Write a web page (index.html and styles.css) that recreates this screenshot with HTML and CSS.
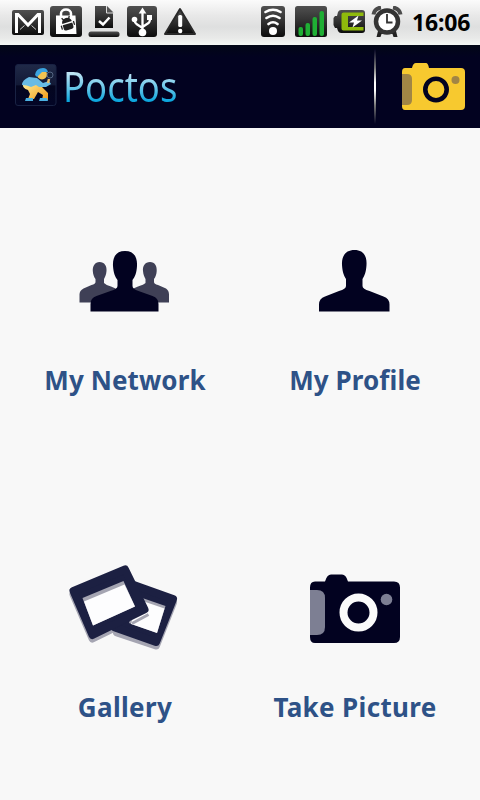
FILE: index.html
```
<!DOCTYPE html>
<html lang="en">
<head>
<meta charset="utf-8">
<title>Poctos</title>
<link rel="stylesheet" href="styles.css">
</head>
<body>
<svg class="defs" width="0" height="0" aria-hidden="true">
  <defs>
    <linearGradient id="dark" x1="0" y1="0" x2="0" y2="1"><stop offset="0" stop-color="#505050"/><stop offset=".5" stop-color="#303030"/><stop offset="1" stop-color="#0c0c0c"/></linearGradient>
    <linearGradient id="tile" x1="0" y1="0" x2="0" y2="1"><stop offset="0" stop-color="#202a48"/><stop offset=".5" stop-color="#121936"/><stop offset=".52" stop-color="#04061f"/><stop offset="1" stop-color="#030526"/></linearGradient>
    <linearGradient id="pants" x1="0" y1="0" x2="1" y2="1"><stop offset="0" stop-color="#fff3a0"/><stop offset="1" stop-color="#f29a16"/></linearGradient>
  </defs>
</svg>
<div class="status">
  <div class="icons">
    <svg viewBox="12 6 32 32"><rect x="12" y="10" width="32" height="25" rx="2" fill="url(#dark)"/><path d="M16.500 33V14.500h1.500l10 10.500 10-10.500h1.500V33" fill="none" stroke="#fff" stroke-width="3"/><path d="M20 29.500l4.500-4M36 29.500l-4.500-4" stroke="#ccc" stroke-width="1"/></svg>
    <svg viewBox="50 6 32 32"><rect x="50" y="6" width="32" height="31" rx="3" fill="url(#dark)"/><path d="M61 17v-3.500a5 4 0 0 1 10 0V17" fill="none" stroke="#fff" stroke-width="2.500"/><path d="M56 15.500h19.500L76.500 34H56z" fill="#fff"/><g transform="rotate(-17 67 24)" fill="#222"><path d="M62.500 22.500a5 4.700 0 0 1 10 0zM62.500 24h10v4a2 2 0 0 1-2 2h-6a2 2 0 0 1-2-2z"/><path d="M63.500 17l1.500 2.500M71.500 17L70 19.500M61 24v4M74 23v4" stroke="#222" stroke-width="1.300"/></g></svg>
    <svg viewBox="88 6 32 32"><path d="M95 6h11.500l6.500 7v15H95z" fill="url(#dark)"/><path d="M107 6v6.500h6.500z" fill="#555"/><path d="M106.500 6v7h7" fill="none" stroke="#ddd"/><path d="M99 21l4 3.500 6.500-7" fill="none" stroke="#fff" stroke-width="2.500"/><rect x="88.500" y="31.500" width="31" height="5.500" rx="2.500" fill="url(#dark)"/></svg>
    <svg viewBox="126 6 32 32"><rect x="127" y="6" width="30" height="31" rx="3" fill="url(#dark)"/><path d="M142.500 11v20M142.500 28l-6-4q-1.800-1-1.800-4M142.500 27l6-4q1.500-1 1.500-5" fill="none" stroke="#fff" stroke-width="2.300"/><path d="M142.500 7.500l3.800 6h-7.600z" fill="#fff"/><circle cx="134.500" cy="19.500" r="2.800" fill="#fff"/><rect x="147" y="15" width="5" height="5" fill="#fff"/><circle cx="142.500" cy="32.500" r="3.800" fill="#fff"/></svg>
    <svg viewBox="164 6 32 32"><path d="M180 9l15 25h-30z" fill="url(#dark)" stroke="#292929" stroke-width="2" stroke-linejoin="round"/><rect x="178.200" y="15" width="4" height="12" rx="1.500" fill="#fff"/><circle cx="180.200" cy="31" r="2.200" fill="#fff"/></svg>
  </div>
  <div class="icons">
    <svg viewBox="257 6 32 32"><rect x="261" y="6" width="24" height="31" rx="3" fill="url(#dark)"/><g fill="none" stroke="#fff" stroke-width="2.600" stroke-linecap="round"><path d="M265.500 12q7.500-4.500 15 0M266.500 18q6.500-4.500 13 0M268.500 24q4.500-3.500 9 0"/></g><circle cx="273" cy="31" r="4" fill="#fff"/></svg>
    <svg viewBox="295 6 32 32"><rect x="295" y="6" width="32" height="31" rx="2.500" fill="url(#dark)"/><g fill="#1fae34"><rect x="298.500" y="27" width="4.500" height="9" rx="2"/><rect x="305.500" y="23" width="4.500" height="13" rx="2"/><rect x="312.500" y="17" width="4.500" height="19" rx="2"/><rect x="319.500" y="11" width="4.500" height="25" rx="2"/></g></svg>
    <svg viewBox="333 6 32 32"><path d="M337 16h-2l-1.500 2v7l1.500 3h2l1 3q1 2 3 2h21q3 0 3-3V13q0-3-3-3h-21q-2 0-3 2z" fill="url(#dark)"/><path d="M363.500 12.500h-20q-2 0-2 2v14q0 2 2 2h20V27H348V16h15.500z" fill="#8fba0c"/><path d="M358.500 15.500l-9.500 7h5l-1.500 5 9.500-7h-5z" fill="#fff"/></svg>
    <svg viewBox="371 6 32 32"><path d="M378 31l-1.500 6h4l1-3h11l1 3h4L396 31z" fill="#222"/><path d="M373.500 14.500q1-6 7.500-7M400.500 14.500q-1-6-7.500-7" stroke="#4b4b4b" stroke-width="4" fill="none"/><circle cx="387" cy="21.500" r="11" fill="#fff" stroke="#343434" stroke-width="4.500"/><path d="M387 14v8.500h5.500" fill="none" stroke="#333" stroke-width="1.800"/></svg>
    <span class="time">16:06</span>
  </div>
</div>
<header class="header">
  <div class="brand">
    <svg class="mark" viewBox="15 64 42 42"><rect x="15.500" y="64.500" width="40.500" height="41" rx="2.500" fill="url(#tile)" stroke="#192243"/><path d="M23 84q-1 4 5 6l2 4-2 5h6l4-7 5 3-1 5h6l0-7-6-6-6-4-6-2z" fill="url(#pants)"/><path d="M22 85q0-5 7-8l8 1 6 5 6-2 2 3-5 3-7 0-3-2-5 2q-4-2-9-2z" fill="#68bbe5"/><circle cx="42" cy="74.500" r="5" fill="#f3c451"/><path d="M35 75q1-7 8-7 4 0 5 4h-6l-5 5z" fill="#3ba4df"/><circle cx="50" cy="75" r="3" fill="#17233e" stroke="#647693" stroke-width=".8"/><path d="M49 79l-1 4" stroke="#edbd69" stroke-width="2.500"/><path d="M26 98h7l0 3h-8zM40 98h7l1 3h-9z" fill="#4bb0e1"/></svg>
    <span class="name">Poctos</span>
  </div>
  <div class="divider"></div>
  <svg class="snap" viewBox="402 62 63 49"><path d="M405 68h7q1-5 4-5h10q2 0 3 5h32q4 0 4 4v34q0 4-4 4h-56q-3 0-3-4V72q0-4 3-4z" fill="#f7c92f"/><path d="M402 74h5q5 0 5 5v21q0 5-5 5h-5z" fill="#a18545"/><circle cx="436" cy="89.500" r="10.700" fill="none" stroke="#020220" stroke-width="4.600"/><circle cx="455.500" cy="80" r="4" fill="#a18545"/></svg>
</header>
<main class="menu">
  <a class="item">
    <svg viewBox="65 225 120 110"><g fill="#3f4056"><path d="M99.500 262c5 0 7.500 4 7 9-.3 4-1.500 6-2.500 8v4q2 2 7 3.500 8 2.500 8 7v9H79.500v-8q0-4 4-6l8-3.500q4-1 4-3v-3c-1.500-2-2.500-4.500-2.700-8-.3-5 2.200-9 6.700-9z"/><path d="M150 262c5 0 7 4 6.700 9-.2 3.500-1.200 6-2.700 8v3q0 2 4 3l8 3.500q3 2 3 6v8h-39v-9q0-4.500 8-7 6-2 7.500-3.500v-4c-1-2-2.200-4-2.500-8-.5-5 2-9 7-9z"/></g><path d="M125 251c9 0 12.500 6 12 15-.4 7-2 11-4.500 14v6q0 3 6 5l14 5q6 2 6 8v7.500H90.500V304q0-6 6-8l14-5q7-2 7-5v-6c-2.500-3-4-7-4.500-14-.5-9 3-15 12-15z" fill="#020220"/></svg>
    <span class="label">My Network</span>
  </a>
  <a class="item">
    <svg viewBox="295 225 120 110"><path d="M354.500 250c9 0 12.500 6 12 15-.4 7-2 11-4 14v7q0 3 7 5l14 5.500q6 2 6 8v7H319v-7q0-6 6-8l14-5.500q7-2 7-5v-7c-2-3-3.600-7-4-14-.5-9 3.500-15 12.500-15z" fill="#020220"/></svg>
    <span class="label">My Profile</span>
  </a>
  <a class="item">
    <svg viewBox="65 552 120 110"><g stroke-linejoin="round" stroke-width="8"><g transform="translate(0 3.500)" fill="#a5a5b2" stroke="#a5a5b2"><path d="M131 584L173 599 156 642 117 629z"/><path d="M73.500 591L125 569.500 144.500 609.500 92.500 635z"/></g><path d="M131 584L173 599 156 642 115 627.500z" fill="#1c2042" stroke="#1c2042"/><path d="M138 596.500L165.500 606 157 633 129 623z" fill="#a5a5b2"/><path d="M138 599.500L164.500 608.500 157 633 131 624z" fill="#fdfdfe"/><path d="M132 623.500L148.500 614.500" stroke="#a5a5b2" stroke-width="3"/><path d="M73.500 591L125 569.500 144.500 609.500 92.500 635z" fill="#1c2042" stroke="#1c2042"/></g><path d="M82.500 598L123.500 581 135 606.500 93 625.500z" fill="#a5a5b2"/><path d="M84 601.500L124.500 584.500 135 606.500 93 625.500z" fill="#fdfdfe"/></svg>
    <span class="label wide">Gallery</span>
  </a>
  <a class="item">
    <svg viewBox="295 552 120 110"><path d="M315 581.500h10q2-7 6-7h11q4 0 6 7h46q6 0 6 6V637q0 6-6 6h-79q-5 0-5-6v-49.500q0-6 5-6z" fill="#020220"/><path d="M310 590h7q8 0 8 8v29q0 8-8 8h-7z" fill="#7d7f93"/><circle cx="358.500" cy="612.500" r="15" fill="none" stroke="#fafafa" stroke-width="8"/><circle cx="386.500" cy="599.500" r="5.800" fill="#7d7f93"/></svg>
    <span class="label wide">Take Picture</span>
  </a>
</main>
</body>
</html>
```
FILE: styles.css
```
* { box-sizing: border-box; }
body {
  margin: 0;
  width: 480px;
  height: 800px;
  overflow: hidden;
  background: #f8f8f8;
  font-family: "Noto Sans", sans-serif;
}
svg { display: block; flex: none; }
.defs { width: 0; height: 0; }
.status {
  height: 45px;
  display: flex;
  justify-content: space-between;
  padding: 6px 9px 0 12px;
  background: linear-gradient(#fbfbfb, #e8e8e8 35%, #dedfdf 60%, #e9eae9 85%, #f4f8f4);
}
.icons { display: flex; gap: 6px; height: 32px; }
.icons svg { width: 32px; height: 32px; }
.time {
  width: 62px;
  padding-left: 3px;
  font-size: 23px;
  line-height: 33px;
  font-weight: 700;
  letter-spacing: -.2px;
  white-space: nowrap;
  color: #000;
}
.header {
  height: 83px;
  display: flex;
  align-items: center;
  padding: 0 15px;
  background: linear-gradient(#020716, #020220 12px);
}
.brand { display: flex; align-items: center; gap: 6px; flex: 1; }
.mark { width: 42px; height: 42px; margin-bottom: 3px; }
.name {
  margin-bottom: 2px;
  font-size: 41px;
  line-height: 52px;
  transform: scaleX(.89);
  transform-origin: left;
  background: linear-gradient(#bfe4f5 25%, #62c4e8 55%, #08a4dc 80%);
  -webkit-background-clip: text;
  background-clip: text;
  color: transparent;
}
.divider {
  width: 2px;
  height: 75px;
  margin-right: 26px;
  background: linear-gradient(#020220, #777 25%, #fff 45%, #fff 55%, #777 75%, #020220);
}
.snap { width: 63px; height: 49px; }
.menu {
  display: grid;
  grid-template-columns: 230px 230px;
  grid-template-rows: 327px 176px;
  padding: 97px 10px 0;
}
.item { display: flex; flex-direction: column; align-items: center; gap: 25px; }
.item svg { width: 120px; height: 110px; }
.label {
  font-size: 26px;
  line-height: 40px;
  font-weight: 700;
  letter-spacing: .1px;
  white-space: nowrap;
  color: #2e5287;
}
.wide { letter-spacing: .35px; }
```
